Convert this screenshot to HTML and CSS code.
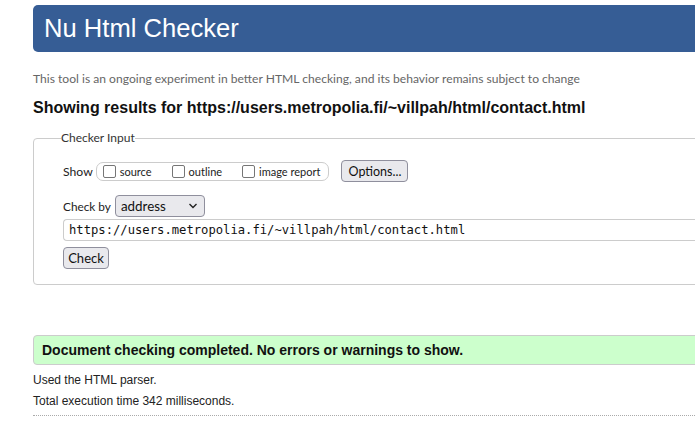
FILE: index.html
```html
<!DOCTYPE html>
<html lang="en">
<head>
<meta charset="utf-8">
<title>Nu Html Checker</title>
<link rel="stylesheet" href="styles.css">
</head>
<body>
<div class="page">
  <h1 class="banner">Nu Html Checker</h1>
  <p class="tagline">This tool is an ongoing experiment in better HTML checking, and its behavior remains subject to change</p>
  <h2 class="results-for">Showing results for https://users.metropolia.fi/~villpah/html/contact.html</h2>
  <fieldset class="checker">
    <legend class="legend">Checker Input</legend>
    <div class="row show-row">
      <span class="lbl">Show</span>
      <span class="pill">
        <label class="opt"><span class="cb"></span>source</label>
        <label class="opt"><span class="cb"></span>outline</label>
        <label class="opt"><span class="cb"></span>image report</label>
      </span>
      <button class="btn options">Options...</button>
    </div>
    <div class="row checkby-row">
      <span class="lbl">Check by</span>
      <span class="select">address<svg class="chev" width="10" height="6" viewBox="0 0 10 6"><path d="M1.5 1 L5 4.5 L8.5 1" fill="none" stroke="#222" stroke-width="1.4"/></svg></span>
    </div>
    <div class="url">https://users.metropolia.fi/~villpah/html/contact.html</div>
    <button class="btn check">Check</button>
  </fieldset>
  <div class="success">Document checking completed. No errors or warnings to show.</div>
  <p class="meta">Used the HTML parser.</p>
  <p class="meta">Total execution time 342 milliseconds.</p>
  <div class="rule"></div>
</div>
</body>
</html>
```
FILE: styles.css
```css
html { overflow: hidden; }
body {
  margin: 0;
  background: #fff;
  color: #222;
  font-family: "Liberation Sans", Arial, sans-serif;
}
.page {
  padding: 5px 0 0 33px;
  width: 900px;
}
.banner {
  margin: 0;
  height: 47px;
  box-sizing: border-box;
  background: #365d95;
  color: #fff;
  border-radius: 5px;
  font-weight: normal;
  font-size: 25.6px;
  line-height: 47px;
  padding-left: 11px;
}
.tagline {
  margin: 19px 0 0 0;
  font-family: Lato, "Open Sans", sans-serif;
  font-size: 12.1px;
  line-height: 16px;
  color: #666;
}
.results-for {
  margin: 11px 0 0 0;
  font-size: 16px;
  line-height: 20px;
  font-weight: bold;
  color: #111;
}
.checker {
  margin: 12px 0 0 0;
  border: 1px solid #ccc;
  border-radius: 4px;
  padding: 14px 0 15px 29px;
  font-family: Lato, "Open Sans", sans-serif;
  font-size: 12px;
}
.legend {
  padding: 0;
  margin-left: -2px;
  color: #333;
  font-size: 12px;
  line-height: 16px;
}
.row {
  display: flex;
  align-items: center;
}
.show-row { height: 22px; }
.lbl { color: #222; font-size: 12.2px; }
.pill {
  display: flex;
  align-items: center;
  margin-left: 3px;
  height: 19px;
  box-sizing: border-box;
  border: 1px solid #ccc;
  border-radius: 7px;
  padding: 0 8px 0 6px;
  gap: 20px;
}
.opt {
  display: flex;
  align-items: center;
  gap: 4px;
  font-size: 11px;
  color: #222;
}
.cb {
  width: 13px;
  height: 13px;
  box-sizing: border-box;
  border: 1px solid #767676;
  border-radius: 2px;
  background: #fff;
}
.btn {
  font-family: Lato, "Open Sans", sans-serif;
  background: #e9e9ed;
  border: 1px solid #8f8f9d;
  border-radius: 4px;
  color: #111;
  padding: 0;
  box-sizing: border-box;
}
.options {
  margin-left: 12px;
  width: 67px;
  height: 22px;
  font-size: 12.5px;
}
.checkby-row { margin-top: 13px; height: 22px; }
.checkby-row .lbl { font-size: 11.8px; }
.select {
  margin-left: 4px;
  width: 90px;
  height: 22px;
  box-sizing: border-box;
  background: #e9e9ed;
  border: 1px solid #8f8f9d;
  border-radius: 4px;
  display: flex;
  align-items: center;
  justify-content: space-between;
  padding: 0 6px 0 5px;
  font-size: 13.4px;
  color: #111;
}
.url {
  margin-top: 2px;
  height: 22px;
  box-sizing: border-box;
  border: 1px solid #ccc;
  border-right: none;
  border-radius: 4px 0 0 4px;
  padding-left: 5px;
  font-family: "DejaVu Sans Mono", monospace;
  font-size: 12.2px;
  line-height: 20px;
  color: #111;
}
.check {
  display: block;
  margin-top: 6px;
  width: 46px;
  height: 22px;
  font-size: 13px;
}
.success {
  margin-top: 50px;
  height: 30px;
  box-sizing: border-box;
  background: #ccffcc;
  border: 1px solid #ccc;
  border-radius: 4px;
  padding-left: 8px;
  font-weight: bold;
  font-size: 14px;
  line-height: 28px;
  color: #111;
}
.meta {
  margin: 8px 0 0 0;
  font-size: 12px;
  line-height: 14px;
  color: #222;
}
.meta + .meta { margin-top: 7px; }
.rule {
  margin-top: 7px;
  border-top: 1px dotted #aaa;
}
```
